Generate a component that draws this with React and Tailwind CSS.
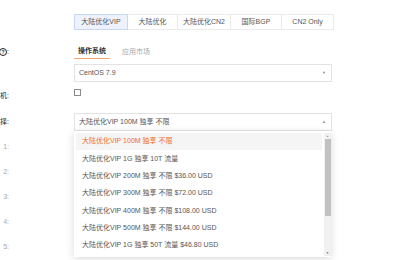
import { useState } from 'react';

const lines = ['大陆优化VIP', '大陆优化', '大陆优化CN2', '国际BGP', 'CN2 Only'];
const tabWidths = ['w-[54px]', 'w-[51px]', 'w-[54px]', 'w-[52px]', 'w-[53px]'];

const plans = [
  '大陆优化VIP 100M 独享 不限',
  '大陆优化VIP 1G 独享 10T 流量',
  '大陆优化VIP 200M 独享 不限 $36.00 USD',
  '大陆优化VIP 300M 独享 不限 $72.00 USD',
  '大陆优化VIP 400M 独享 不限 $108.00 USD',
  '大陆优化VIP 500M 独享 不限 $144.00 USD',
  '大陆优化VIP 1G 独享 50T 流量 $46.80 USD',
];

// label column is mostly scrolled off to the left; only the tail shows
const Label = ({ children, className = '' }) => (
  <div className={`w-[9px] flex justify-end items-center overflow-hidden whitespace-nowrap ${className}`}>
    {children}
  </div>
);

const App = () => {
  const [line, setLine] = useState(0);
  const [plan, setPlan] = useState(0);

  return (
    <div
      className="w-[400px] h-[260px] bg-white overflow-hidden text-[7px] text-[#555]"
      style={{ fontFamily: '"Liberation Sans", "Noto Sans CJK SC", sans-serif' }}
    >
      <div className="pt-[14px] flex flex-col">
        {/* line tabs */}
        <div className="flex h-[16px] ml-[74px]">
          {lines.map((l, i) => (
            <button
              key={l}
              onClick={() => setLine(i)}
              className={`${tabWidths[i]} h-full flex items-center justify-center border -ml-px first:ml-0 ${
                i === line ? 'bg-[#eef2fd] border-[#c9d6f6] relative z-10' : 'bg-white border-[#ebebeb]'
              }`}
            >
              {l}
            </button>
          ))}
        </div>

        {/* os tabs */}
        <div className="flex mt-[15px] h-[14px]">
          <Label className="text-[#222] font-bold">
            <span className="w-[8px] h-[8px] shrink-0 rounded-full border-[1.5px] border-[#222] inline-flex items-center justify-center text-[5px] leading-none">?</span>
            <span className="font-normal">:</span>
          </Label>
          <div className="ml-[65px] flex items-stretch gap-[12px]">
            <div className="w-[36px] flex items-center justify-center border-b border-[#f8a56f] text-[#333] font-semibold">
              操作系统
            </div>
            <div className="flex items-center text-[#aaa]">应用市场</div>
          </div>
        </div>

        {/* os select */}
        <div className="flex mt-[5px]">
          <Label />
          <div className="ml-[65px] w-[258px] h-[18px] border border-[#e3e3e3] flex items-center justify-between pl-[4px] pr-[5px]">
            <span>CentOS 7.9</span>
            <span className="text-[#888] text-[4px]">▼</span>
          </div>
        </div>

        {/* checkbox */}
        <div className="flex mt-[7px] h-[14px]">
          <Label className="text-[#222] items-center">机:</Label>
          <div className="ml-[65px]">
            <div className="w-[7px] h-[7px] border border-[#8a8a8a] bg-white" />
          </div>
        </div>

        {/* plan select */}
        <div className="flex mt-[10px]">
          <Label className="text-[#222] items-center">择:</Label>
          <div className="ml-[65px] relative w-[258px]">
            <div className="h-[18px] border border-[#e3e3e3] flex items-center justify-between pl-[4px] pr-[5px]">
              <span>{plans[plan]}</span>
              <span className="text-[#888] text-[4px]">▲</span>
            </div>

            <div className="absolute left-0 top-full w-[257px] h-[126px] bg-white z-20 shadow-[0_2px_8px_rgba(0,0,0,0.15)] flex pl-[2px] pt-[2px] pb-[1px]">
              <div className="flex-1 overflow-hidden">
                {plans.map((p, i) => (
                  <div
                    key={p}
                    onClick={() => setPlan(i)}
                    className={`h-[17.3px] flex items-center pl-[6px] whitespace-nowrap ${
                      i === plan ? 'bg-[#f5f5f5] text-[#f36c2b]' : 'text-[#555]'
                    }`}
                  >
                    {p}
                  </div>
                ))}
              </div>
              <div className="w-[7px] ml-[2px] bg-[#f1f1f1] flex flex-col items-center">
                <span className="text-[3px] text-[#999] h-[6px] leading-[6px]">▲</span>
                <div className="w-[6px] h-[77px] bg-[#c1c1c1]" />
                <div className="flex-1" />
                <span className="text-[3px] text-[#555] h-[6px] leading-[6px]">▼</span>
              </div>
            </div>
          </div>
        </div>

        {/* ip rows, covered by the open dropdown */}
        {[1, 2, 3, 4, 5].map((n) => (
          <div key={n} className={`flex h-[25px] ${n === 1 ? 'mt-[4px]' : ''}`}>
            <Label className="text-[#aaa]">{n}:</Label>
          </div>
        ))}
      </div>
    </div>
  );
};

export default App;
